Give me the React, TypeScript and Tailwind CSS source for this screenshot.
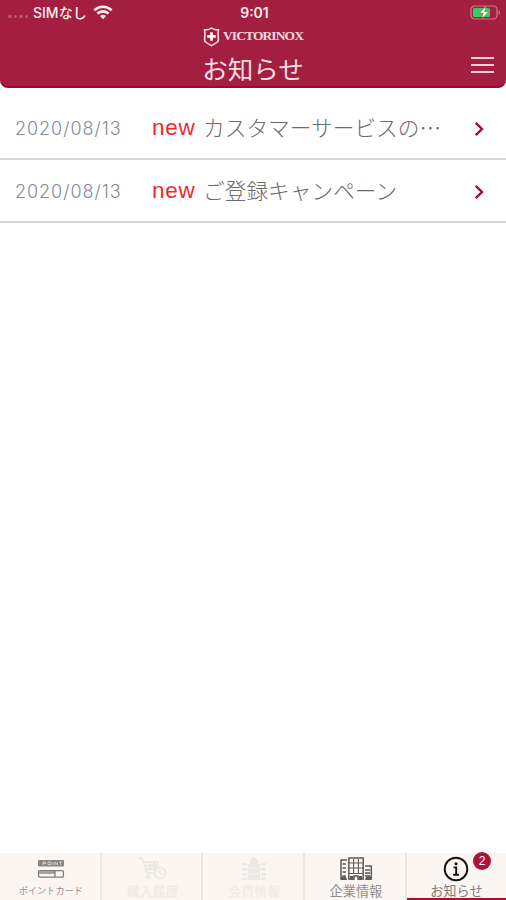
import React from "react";

function Wifi() {
  return (
    <svg width="20" height="15" viewBox="0 0 20 15" fill="none" stroke="#fbeef1" strokeWidth="2.6">
      <path d="M1.3 5.2C6.3.5 13.7.5 18.7 5.2" />
      <path d="M4.4 8.5c3.2-2.9 8-2.9 11.2 0" />
      <path d="M7 10.9c1.7-1.5 4.3-1.5 6 0L10 14.2z" fill="#fbeef1" stroke="none" />
    </svg>
  );
}

function Battery() {
  return (
    <svg width="31" height="15" viewBox="0 0 31 15" fill="none">
      <rect x="1" y="1" width="26" height="13" rx="3.6" stroke="#c87d90" strokeWidth="1.2" />
      <path d="M28.6 5.2c1.8.6 1.8 4 0 4.6z" fill="#c87d90" />
      <rect x="3" y="3" width="17" height="9" rx="1.6" fill="#35cf5b" />
      <path d="M16 1.2 9.4 8h3.8l-1.4 5.6L18.8 6.7h-4z" fill="#fff" stroke="#a05a4f" strokeWidth=".6" />
    </svg>
  );
}

function Shield() {
  return (
    <svg width="17" height="20" viewBox="0 0 17 20" fill="none">
      <path d="M8.5 1C7 2.2 4.5 3 1.5 2.800c.5 2 .5 4.200.3 6.200-.2 2-.4 3.800.2 5.500 2 1.700 4.300 2.700 6.500 4.200 2.200-1.500 4.500-2.500 6.500-4.200.6-1.700.4-3.500.2-5.500-.2-2-.2-4.200.3-6.200C12.500 3 10 2.200 8.500 1z" stroke="#f7dfe4" strokeWidth="1.600" />
      <path d="M7.200 5.200h2.600v2.900h3v2.600h-3v3H7.200v-3h-3V8.100h3z" fill="#fff" />
    </svg>
  );
}

function Row({ title }: { title: string }) {
  return (
    <li className="flex h-[63px] items-center border-b-2 border-[#d8d8d8] pl-[15px] pr-[21px]">
      <span className="mt-px w-[137px] whitespace-nowrap font-['Inter',sans-serif] text-[18px] font-light tracking-[0.97px] text-[#858b99]">2020/08/13</span>
      <span className="mt-px w-[51px] font-['Liberation_Sans',sans-serif] text-[22.5px] tracking-[0.7px] text-[#f0282c]">new</span>
      <span className="mb-[2px] flex-1 whitespace-nowrap font-['Noto_Sans_CJK_JP',sans-serif] text-[21.7px] font-light leading-[30px] text-[#6c6c6c]">{title}</span>
      <svg className="mt-[3px]" width="11" height="16" viewBox="0 0 11 16" fill="none" stroke="#a9082f" strokeWidth="2.4">
        <path d="m1.7 1.8 6.300 6.200-6.300 6.200" />
      </svg>
    </li>
  );
}

function CardIcon() {
  return (
    <svg width="28" height="19" viewBox="0 0 28 19" fill="none">
      <rect x="1" y="0" width="26" height="6.5" rx="1" fill="#898583" />
      <path d="M6 5V2h2.5v1.5H6M11 2h3v2.5h-3zM16 2v3m2 0V2l2.5 3V2m1.500 0h3m-1.500 0v3" stroke="#ddd" strokeWidth=".8" />
      <rect x="1.6" y="10.6" width="24.8" height="6.5" rx="1" stroke="#817d7b" strokeWidth="1.3" />
      <path d="M2 11h16v3H2z" fill="#a5a19f" />
      <path d="M18 10.6v6.5" stroke="#777" strokeWidth="1.2" />
    </svg>
  );
}

function CartIcon() {
  return (
    <svg width="32" height="26" viewBox="0 0 32 26" fill="none" stroke="#ede8e5" strokeWidth="1.8">
      <path d="M1 2h4l5 15h9M6 6h15l-2 7H9M7 9.5h13M12 6l2 7M17 6v7" />
      <circle cx="11" cy="21" r="1.5" />
      <circle cx="23" cy="17" r="5.5" />
      <path d="M23 13.5V17l3 2" />
    </svg>
  );
}

function StoreIcon() {
  return (
    <svg width="26" height="24" viewBox="0 0 26 24" fill="#ece8e5">
      <circle cx="13" cy="5" r="4.5" />
      <path d="M7 7h12v16H7zM1 6h5v2.5H1zM1 11h5v2.5H1zM1 16h5v2.5H1zM1 20.5h5V23H1zM20 6h5v2.5h-5zM20 11h5v2.5h-5zM20 16h5v2.5h-5zM20 20.5h5V23h-5z" />
      <path d="M8 11h10M8 17h10" stroke="#f8f3f0" />
    </svg>
  );
}

function BuildingsIcon() {
  return (
    <svg width="34" height="24" viewBox="0 0 34 24" fill="none" stroke="#5f5b59" strokeWidth="1.5">
      <path d="M8 3H2v19h6" />
      <path d="M3.5 7H7M3.5 11H7M3.5 15H7M3.5 19H7" />
      <path d="M15 22H9.8V1h14.4v21H19v-3h-4z" />
      <path d="M14.6 2v15M19.4 2v15M10 6h14M10 11h14M10 16.5h14" strokeWidth="1.1" />
      <path d="M26 9h6.3v13H26M26 13h5M26 16h5M26 19h5" />
      <path d="M11 19h3.500v4H11zM19.5 19H23v4h-3.500zM27 19.5h5V23h-5zM2 19.5h5V23H2z" fill="#5f5b59" stroke="none" />
    </svg>
  );
}

function InfoIcon() {
  return (
    <svg width="26" height="26" viewBox="0 0 26 26" fill="none">
      <circle cx="13" cy="13" r="11.3" stroke="#111" strokeWidth="1.9" />
      <circle cx="13" cy="7.7" r="1.5" fill="#111" />
      <path d="M10.5 11.4h2.7v7M10.2 18.7h5.7" stroke="#111" strokeWidth="1.9" />
    </svg>
  );
}

function Tab({ icon, label, style, last = false }: { icon: React.ReactNode; label: string; style: string; last?: boolean }) {
  return (
    <div className={`relative flex flex-col items-center ${last ? "flex-1 border-b-2 border-[#ad0c35]" : "w-[101.7px] border-r-2 border-[#ece7e5] pl-[2px]"}`}>
      <div className="flex h-[32px] items-center">{icon}</div>
      <span className={`-mt-px whitespace-nowrap font-['Noto_Sans_CJK_JP',sans-serif] leading-[13px] ${style}`}>{label}</span>
      {last && (
        <span className="absolute right-[15px] top-[-1px] flex h-[18px] w-[18px] items-center justify-center rounded-full bg-[#ad1238] font-['Liberation_Sans',sans-serif] text-[12px] text-white">2</span>
      )}
    </div>
  );
}

export default function App() {
  return (
    <div className="flex h-[900px] w-[506px] flex-col overflow-hidden bg-white">
      <header className="h-[88px] rounded-b-[8px] border-b-2 border-[#9c0830] bg-[#a41e3f] text-[#fbeef1]">
        <div className="grid h-[25px] grid-cols-3 items-center pl-[8px] pr-[5px]">
          <div className="flex items-center">
            <div className="mt-[8px] flex w-[25px] gap-[2px]">
              {[0, 1, 2, 3].map((i) => (
                <span key={i} className="h-[3px] w-[3.5px] rounded-full bg-[#b9586f]" />
              ))}
            </div>
            <span className="mr-[6px] whitespace-nowrap font-['Inter','Noto_Sans_CJK_JP',sans-serif] text-[14px] font-medium leading-[24px]">SIMなし</span>
            <Wifi />
          </div>
          <span className="text-center font-['Inter',sans-serif] text-[14px] font-semibold leading-[24px]">9:01</span>
          <div className="flex justify-end"><Battery /></div>
        </div>
        <div className="flex h-[23px] items-center justify-center gap-[3px]">
          <Shield />
          <span className="whitespace-nowrap font-['Liberation_Serif',serif] text-[13.5px] font-bold tracking-[-0.88px] text-[#f3d9df]">VICTORINOX</span>
        </div>
        <div className="grid h-[38px] grid-cols-3 items-center pl-[12px] pr-[12px]">
          <span />
          <h1 className="mt-[2px] whitespace-nowrap text-center font-['Noto_Sans_CJK_JP',sans-serif] text-[25.5px] font-normal leading-[36px] text-[#f6dfe4]">お知らせ</h1>
          <div className="flex flex-col items-end gap-[5px] pb-[4px]">
            <span className="h-[2px] w-[23px] bg-[#f0d3d9]" />
            <span className="h-[2px] w-[23px] bg-[#f0d3d9]" />
            <span className="h-[2px] w-[23px] bg-[#f0d3d9]" />
          </div>
        </div>
      </header>
      <main className="flex-1 pt-[9px]">
        <ul>
          <Row title="カスタマーサービスの…" />
          <Row title="ご登録キャンペーン" />
        </ul>
      </main>
      <nav className="flex h-[47px] bg-[#fcf6f2]">
        <Tab icon={<CardIcon />} label="ポイントカード" style="text-[9.2px] text-[#96928f]" />
        <Tab icon={<CartIcon />} label="購入履歴" style="text-[13px] font-bold text-[#f1ebe8]" />
        <Tab icon={<StoreIcon />} label="会員情報" style="text-[13px] font-bold text-[#f1ebe8]" />
        <Tab icon={<BuildingsIcon />} label="企業情報" style="text-[13.2px] text-[#928e8c]" />
        <Tab icon={<InfoIcon />} label="お知らせ" style="text-[13.2px] text-[#817d7b]" last />
      </nav>
    </div>
  );
}
